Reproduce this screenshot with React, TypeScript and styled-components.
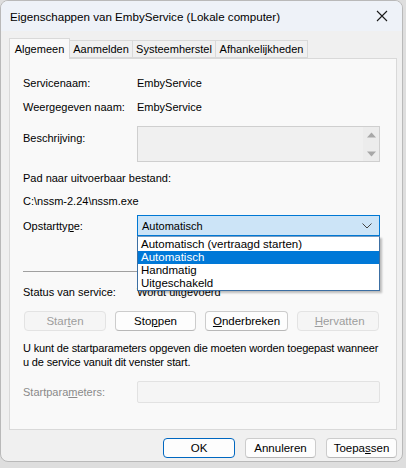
import {ReactElement} from "react";
import styled, {createGlobalStyle} from "styled-components";

const GlobalStyle = createGlobalStyle`
  html, body {
    margin: 0;
    padding: 0;
    background: #dedede;
  }
  body {
    font-family: "Liberation Sans", Arial, sans-serif;
    font-size: 11px;
    color: #000;
  }
`;

const Window = styled.div`
  width: 403px;
  height: 462px;
  box-sizing: border-box;
  border: 1px solid #b9b9b9;
  border-radius: 8px;
  background: #f0f0f0;
  overflow: hidden;
  display: flex;
  flex-direction: column;
`;

const TitleBar = styled.div`
  height: 30px;
  flex: 0 0 30px;
  background: #eef2f8;
  display: flex;
  align-items: center;
  justify-content: space-between;
  padding: 0 0 0 9px;
  font-size: 11.6px;
`;

const CloseButton = styled.div`
  width: 40px;
  height: 30px;
  display: flex;
  align-items: center;
  justify-content: center;
`;

const Body = styled.div`
  padding: 7px 5px 0 8px;
  display: flex;
  flex-direction: column;
`;

const TabStrip = styled.div`
  display: flex;
  height: 20px;
`;

const Tab = styled.div<{ $active?: boolean; $width: number }>`
  width: ${p => p.$width}px;
  height: ${p => (p.$active ? "21px" : "18px")};
  margin-top: ${p => (p.$active ? "0" : "2px")};
  box-sizing: border-box;
  border: 1px solid #d9d9d9;
  border-bottom: ${p => (p.$active ? "none" : "1px solid #d9d9d9")};
  border-left: ${p => (p.$active ? "1px solid #d9d9d9" : "none")};
  background: ${p => (p.$active ? "#f9f9f9" : "#f0f0f0")};
  display: flex;
  align-items: center;
  justify-content: center;
  position: relative;
  z-index: ${p => (p.$active ? 2 : 1)};
`;

const Panel = styled.div`
  height: 372px;
  box-sizing: border-box;
  border: 1px solid #d9d9d9;
  background: #f9f9f9;
  padding: 16px 18px 0 13px;
  display: flex;
  flex-direction: column;
  position: relative;
  z-index: 1;
`;

const Row = styled.div<{ $top?: number; $height?: number }>`
  display: grid;
  grid-template-columns: 114px 243px;
  align-items: ${p => (p.$height && p.$height > 24 ? "start" : "center")};
  min-height: ${p => p.$height ?? 16}px;
  margin-top: ${p => p.$top ?? 0}px;
  position: relative;
`;

const Label = styled.span<{ $disabled?: boolean; $offset?: number }>`
  color: ${p => (p.$disabled ? "#8a8a8a" : "#000")};
  margin-top: ${p => p.$offset ?? 0}px;
`;

const Line = styled.div<{ $top?: number }>`
  margin-top: ${p => p.$top ?? 0}px;
  height: 16px;
  display: flex;
  align-items: center;
`;

const TextArea = styled.div`
  height: 36px;
  box-sizing: border-box;
  border: 1px solid #cfcfcf;
  background: #f0f0f0;
  display: flex;
  justify-content: flex-end;
`;

const ScrollBar = styled.div`
  width: 16px;
  display: flex;
  flex-direction: column;
  justify-content: space-between;
  align-items: center;
  padding: 5px 0 4px;
  background: #ececec;
`;

const Combo = styled.div`
  height: 21px;
  box-sizing: border-box;
  border: 1px solid #0078d4;
  background: #cce4f7;
  display: flex;
  align-items: center;
  justify-content: space-between;
  padding: 0 7px 0 4px;
  position: relative;
`;

const DropList = styled.div`
  position: absolute;
  left: -1px;
  right: -1px;
  top: 20px;
  height: 55px;
  box-sizing: border-box;
  border: 1px solid #3c6fa3;
  border-top-color: #7a9cc0;
  background: #fff;
  padding: 1px 0;
  box-shadow: 2px 2px 2px rgba(0, 0, 0, 0.25);
  z-index: 10;
`;

const DropItem = styled.div<{ $selected?: boolean }>`
  height: 13px;
  line-height: 13px;
  padding-left: 3px;
  font-size: 11.5px;
  background: ${p => (p.$selected ? "#0078d7" : "transparent")};
  color: ${p => (p.$selected ? "#fff" : "#000")};
`;

const Separator = styled.div`
  margin-top: 35px;
  height: 1px;
  background: #a0a0a0;
  width: 356px;
`;

const ButtonRow = styled.div`
  margin-top: 11px;
  display: flex;
  justify-content: space-between;
  width: 356px;
  padding-left: 1px;
  box-sizing: border-box;
`;

const PushButton = styled.div<{ $disabled?: boolean; $default?: boolean; $width?: number }>`
  width: ${p => p.$width ?? 82}px;
  height: 20px;
  box-sizing: border-box;
  border: 1px solid ${p => (p.$default ? "#0067c0" : p.$disabled ? "#e3e3e3" : "#cccccc")};
  border-bottom-color: ${p => (p.$default ? "#0067c0" : p.$disabled ? "#e3e3e3" : "#b8b8b8")};
  border-radius: 4px;
  background: ${p => (p.$disabled ? "#f5f5f5" : "#fdfdfd")};
  color: ${p => (p.$disabled ? "#9d9d9d" : "#000")};
  display: flex;
  align-items: center;
  justify-content: center;
  font-size: 11.5px;
`;

const Help = styled.p`
  margin: 11px 0 0 0;
  line-height: 13.5px;
  font-size: 11px;
  letter-spacing: -0.15px;
  white-space: nowrap;
`;

const Input = styled.div`
  height: 22px;
  box-sizing: border-box;
  border: 1px solid #e2e2e2;
  border-radius: 2px;
  background: #f5f5f5;
`;

const Footer = styled.div`
  display: flex;
  justify-content: flex-end;
  gap: 10px;
  padding: 8px 0 0 0;
`;

const U = styled.span`
  text-decoration: underline;
  text-underline-offset: 1px;
`;

const Arrow = ({up}: { up?: boolean }) => (
  <svg width="9" height="6" viewBox="0 0 9 6">
    <path d={up ? "M0 5.5 L4.5 0.5 L9 5.5 Z" : "M0 0.5 L4.5 5.5 L9 0.5 Z"} fill="#a8a8a8"/>
  </svg>
);

export default function App(): ReactElement {
  return (
    <>
      <GlobalStyle/>
      <Window>
        <TitleBar>
          <span>Eigenschappen van EmbyService (Lokale computer)</span>
          <CloseButton>
            <svg width="12" height="12" viewBox="0 0 12 12">
              <path d="M1 1 L11 11 M11 1 L1 11" stroke="#1a1a1a" strokeWidth="1.1"/>
            </svg>
          </CloseButton>
        </TitleBar>
        <Body>
          <TabStrip>
            <Tab $active $width={61}>Algemeen</Tab>
            <Tab $width={63}>Aanmelden</Tab>
            <Tab $width={83}>Systeemherstel</Tab>
            <Tab $width={92}>Afhankelijkheden</Tab>
          </TabStrip>
          <Panel>
            <Row>
              <Label>Servicenaam:</Label>
              <span>EmbyService</span>
            </Row>
            <Row $top={8}>
              <Label>Weergegeven naam:</Label>
              <span>EmbyService</span>
            </Row>
            <Row $top={11} $height={36}>
              <Label $offset={6}>Beschrijving:</Label>
              <TextArea>
                <ScrollBar>
                  <Arrow up/>
                  <Arrow/>
                </ScrollBar>
              </TextArea>
            </Row>
            <Line $top={8}>Pad naar uitvoerbaar bestand:</Line>
            <Line $top={7}>C:\nssm-2.24\nssm.exe</Line>
            <Row $top={6} $height={21}>
              <Label>Opstartty<U>p</U>e:</Label>
              <Combo>
                <span>Automatisch</span>
                <svg width="10" height="6" viewBox="0 0 10 6">
                  <path d="M0.5 0.5 L5 5 L9.5 0.5" fill="none" stroke="#444" strokeWidth="1"/>
                </svg>
                <DropList>
                  <DropItem>Automatisch (vertraagd starten)</DropItem>
                  <DropItem $selected>Automatisch</DropItem>
                  <DropItem>Handmatig</DropItem>
                  <DropItem>Uitgeschakeld</DropItem>
                </DropList>
              </Combo>
            </Row>
            <Separator/>
            <Row $top={12}>
              <Label>Status van service:</Label>
              <span>Wordt uitgevoerd</span>
            </Row>
            <ButtonRow>
              <PushButton $disabled>Star<U>t</U>en</PushButton>
              <PushButton $width={81}>Sto<U>p</U>pen</PushButton>
              <PushButton $width={83}><U>O</U>nderbreken</PushButton>
              <PushButton $disabled>&nbsp;<U>H</U>ervatten</PushButton>
            </ButtonRow>
            <Help>
              U kunt de startparameters opgeven die moeten worden toegepast wanneer
              <br/>
              u de service vanuit dit venster start.
            </Help>
            <Row $top={12} $height={22}>
              <Label $disabled>Startpara<U>m</U>eters:</Label>
              <Input/>
            </Row>
          </Panel>
          <Footer>
            <PushButton $default $width={72}>OK</PushButton>
            <PushButton $width={71}>Annuleren</PushButton>
            <PushButton $width={71}>Toepa<U>s</U>sen</PushButton>
          </Footer>
        </Body>
      </Window>
    </>
  );
}
